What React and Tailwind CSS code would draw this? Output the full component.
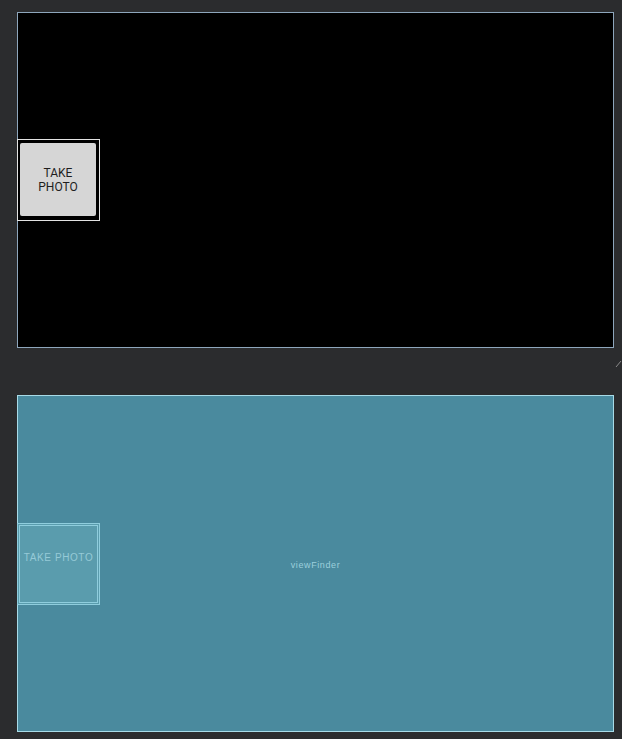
import React from "react";

const App = () => {
  return (
    <div className="w-[622px] h-[739px] bg-[#2b2c2e] pt-[12px] pl-[17px] flex flex-col gap-[47px] font-['Roboto',sans-serif] relative overflow-hidden">
      {/* Design preview */}
      <div className="w-[597px] h-[336px] bg-black border border-[#8ea6bc] flex items-center">
        <div className="-ml-px w-[83px] h-[82px] border border-[#e4e4e4] pt-[3px] pl-[2px] pr-[3px] pb-[4px]">
          <div className="w-full h-full bg-[#d6d6d6] rounded-[2px] flex items-center justify-center text-center text-[12px] leading-[14px] text-[#1e1e1e]">
            TAKE
            <br />
            PHOTO
          </div>
        </div>
      </div>

      {/* Blueprint */}
      <div className="relative w-[597px] h-[337px] bg-[#4a8a9e] border border-[#a8dbe7] flex items-center">
        <div className="-ml-px w-[83px] h-[82px] border border-[#8fcddd] p-[1px] bg-[#5a9cad]">
          <div className="w-full h-full border border-[#8fcddd] flex justify-center pt-[26px] text-[10px] leading-[12px] tracking-[0.6px] text-[#96cad7] font-['Liberation_Sans',sans-serif]">
            TAKE PHOTO
          </div>
        </div>
        <span className="absolute left-1/2 top-1/2 -translate-x-1/2 -translate-y-[40%] text-[9px] tracking-[0.6px] text-[#9ccfdc] font-['Liberation_Sans',sans-serif]">
          viewFinder
        </span>
      </div>

      {/* resize handle */}
      <svg className="absolute left-[615px] top-[360px]" width="7" height="8" viewBox="0 0 7 8">
        <path d="M1 7 L6 1" stroke="#8a8a8a" strokeWidth="1" />
      </svg>
    </div>
  );
};

export default App;
